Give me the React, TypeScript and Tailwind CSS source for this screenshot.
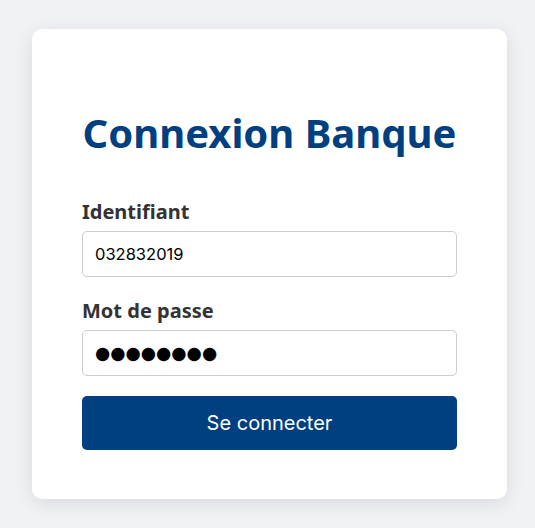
import React from 'react';

export default function App() {
  return (
    <div className="min-h-screen bg-[#f0f2f5] pt-[29px] pl-[32px] pb-[29px] font-['Noto_Sans',sans-serif]">
      <div className="w-[475px] rounded-[10px] bg-white px-[50px] pt-[50px] pb-[49px] shadow-[0_4px_20px_rgba(0,0,0,0.1)]">
        <h1 className="mt-[27px] mb-[38px] text-center text-[40px] leading-[54px] font-bold text-[#004080]">
          Connexion Banque
        </h1>

        <div className="mb-5">
          <label className="mb-[6px] block text-[20px] leading-[27px] font-bold text-[#333]">Identifiant</label>
          <input
            type="text"
            defaultValue="032832019"
            className="h-[46px] w-full rounded-[5px] border border-[#ccc] px-3 font-['Inter',sans-serif] text-[16.5px] text-black outline-none"
          />
        </div>

        <div className="mb-5">
          <label className="mb-[6px] block text-[20px] leading-[27px] font-bold text-[#333]">Mot de passe</label>
          <input
            type="text"
            readOnly
            value="●●●●●●●●"
            className="h-[46px] w-full rounded-[5px] border border-[#ccc] px-3 font-['DejaVu_Sans',sans-serif] text-[17.5px] text-black outline-none"
          />
        </div>

        <button className="h-[54px] w-full rounded-[5px] bg-[#004080] font-['Inter',sans-serif] text-[20px] text-white">
          Se connecter
        </button>
      </div>
    </div>
  );
}
